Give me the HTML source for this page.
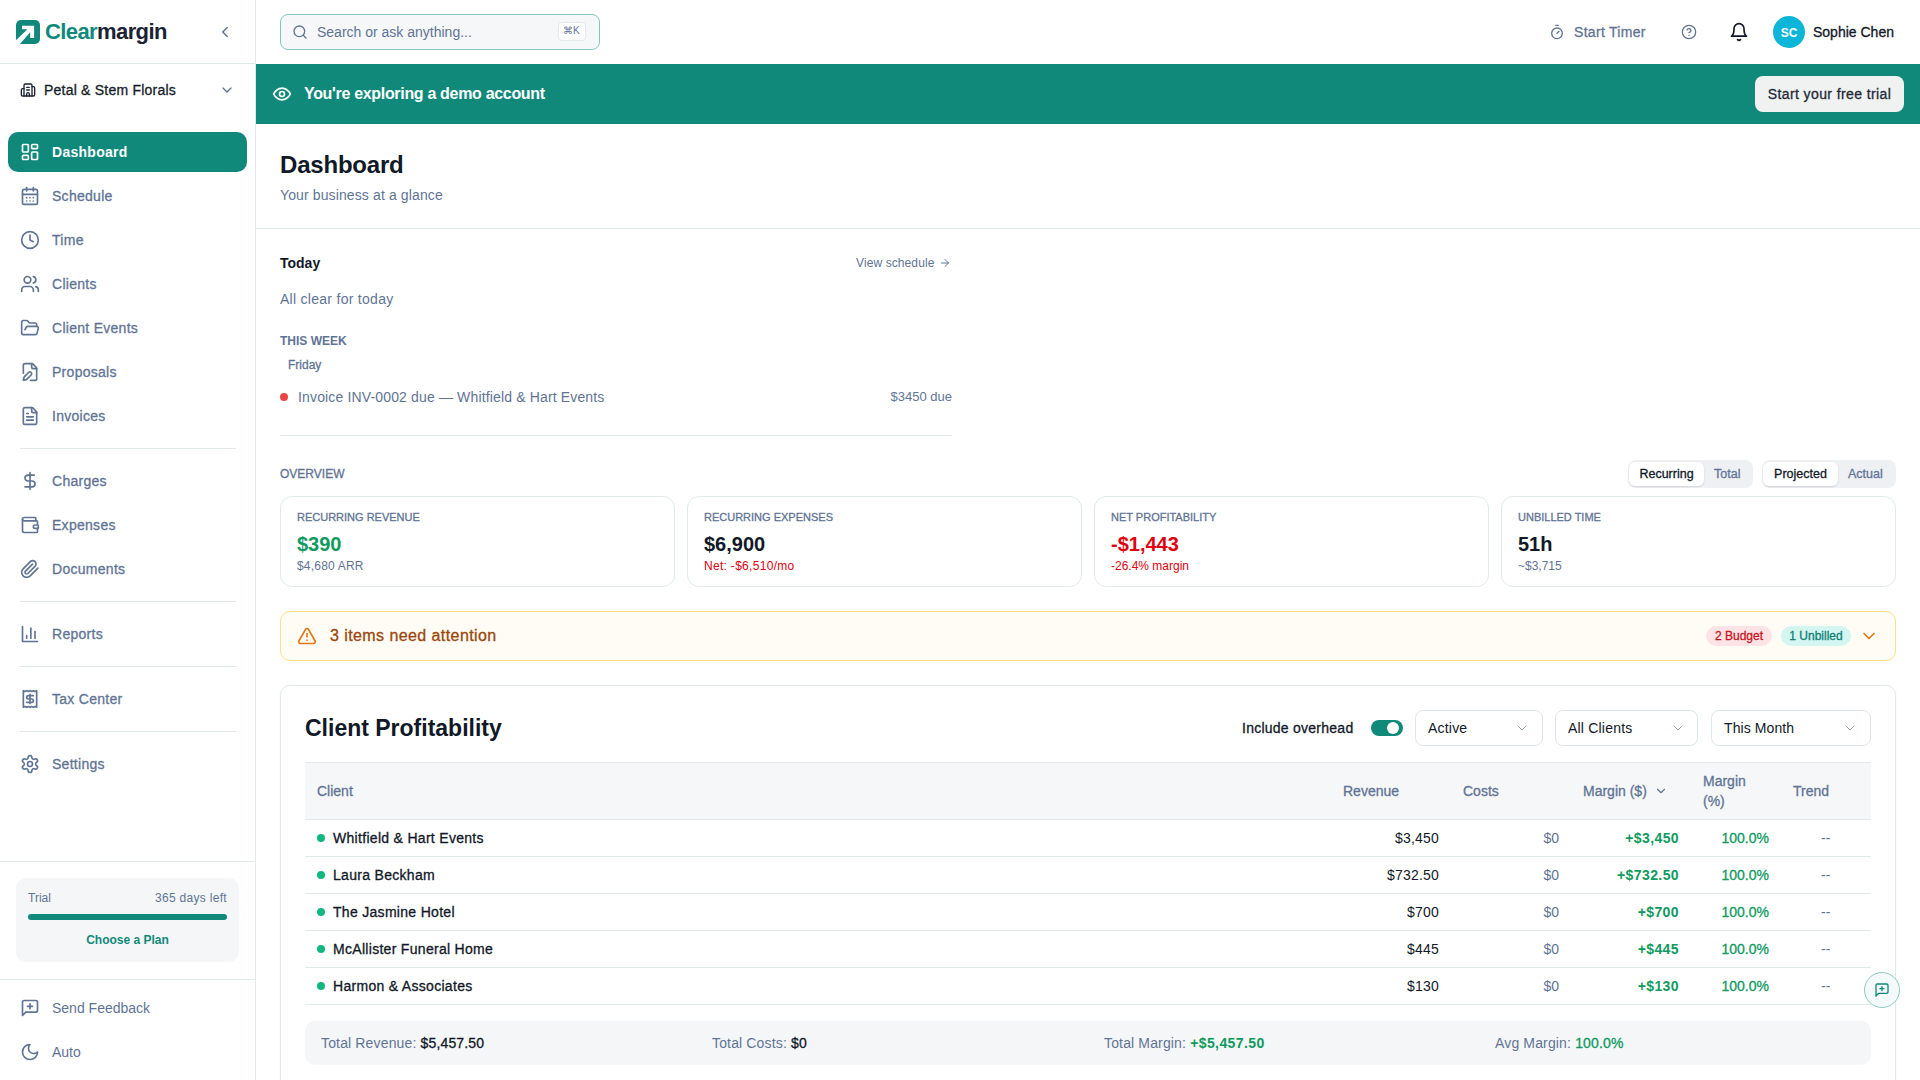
<!DOCTYPE html>
<html><head><meta charset="utf-8">
<style>
*{box-sizing:border-box;margin:0;padding:0}
html,body{width:1920px;height:1080px;overflow:hidden;background:#fff}
body{font-family:"Liberation Sans",sans-serif;color:#111827;position:relative}
.abs{position:absolute}
svg.i{position:absolute;fill:none;stroke:currentColor;stroke-width:2;stroke-linecap:round;stroke-linejoin:round}
.t{position:absolute;white-space:nowrap;line-height:1}
.med{-webkit-text-stroke:0.3px currentColor}
/* sidebar */
#sb{position:absolute;left:0;top:0;width:256px;height:1080px;border-right:1px solid #e1e9ea;background:#fff}
.hr{position:absolute;height:1px;background:#e1e9ea}
.nav{position:absolute;left:8px;width:239px;height:40px;border-radius:10px;color:#5f7495}
.nav svg{left:12px;top:10px;width:20px;height:20px}
.nav .t{left:44px;top:13px;font-size:14px;letter-spacing:0.28px}
.nav.act{background:#10897b;color:#fff}
/* main */
#main{position:absolute;left:256px;top:0;right:0;height:1080px}
.card{position:absolute;border:1px solid #e2eaea;border-radius:12px;background:#fff}
.lbl{font-size:11px;color:#5f7495}
.big{font-size:20px;font-weight:700}
.sub{font-size:12px}
</style></head>
<body>
<!-- SIDEBAR -->
<div id="sb">
  <!-- logo -->
  <svg class="abs" style="left:16px;top:20px;width:24px;height:24px" viewBox="0 0 24 24">
    <rect x="0" y="0" width="24" height="24" rx="5" fill="#10897b"/>
    <path d="M0 20.2 L11.4 9.2 L6 9.2 L6 5.8 L18.1 5.8 L18.1 18.1 L14.2 18.1 L14.2 12.3 L3.9 24 L0 24 Z" fill="#fff"/>
  </svg>
  <div class="t" style="left:45px;top:21px;font-size:22px;font-weight:700;letter-spacing:-0.6px"><span style="color:#10897b">Clear</span><span style="color:#1a2233">margin</span></div>
  <svg class="i" style="left:216px;top:23px;width:18px;height:18px;color:#5f7495" viewBox="0 0 24 24"><path d="m15 18-6-6 6-6"/></svg>
  <div class="hr" style="left:0;top:63px;width:255px"></div>
  <!-- org -->
  <svg class="i" style="left:20px;top:82px;width:16px;height:16px;color:#1a2233" viewBox="0 0 24 24"><path d="M10 12h4"/><path d="M10 8h4"/><path d="M14 21v-3a2 2 0 0 0-4 0v3"/><path d="M6 10H4a2 2 0 0 0-2 2v7a2 2 0 0 0 2 2h16a2 2 0 0 0 2-2V9a2 2 0 0 0-2-2h-2"/><path d="M6 21V5a2 2 0 0 1 2-2h8a2 2 0 0 1 2 2v16"/></svg>
  <div class="t med" style="left:44px;top:83px;font-size:14px;color:#161c28;letter-spacing:0.22px">Petal &amp; Stem Florals</div>
  <svg class="i" style="left:219px;top:82px;width:16px;height:16px;color:#5f7495" viewBox="0 0 24 24"><path d="m6 9 6 6 6-6"/></svg>

  <div class="nav act" style="top:132px"><svg class="i" viewBox="0 0 24 24"><rect width="7" height="9" x="3" y="3" rx="1"/><rect width="7" height="5" x="14" y="3" rx="1"/><rect width="7" height="9" x="14" y="12" rx="1"/><rect width="7" height="5" x="3" y="16" rx="1"/></svg><div class="t" style="font-weight:700">Dashboard</div></div>
  <div class="nav" style="top:176px"><svg class="i" viewBox="0 0 24 24"><path d="M8 2v4"/><path d="M16 2v4"/><rect width="18" height="18" x="3" y="4" rx="2"/><path d="M3 10h18"/><path d="M8 14h.01"/><path d="M12 14h.01"/><path d="M16 14h.01"/><path d="M8 18h.01"/><path d="M12 18h.01"/><path d="M16 18h.01"/></svg><div class="t med">Schedule</div></div>
  <div class="nav" style="top:220px"><svg class="i" viewBox="0 0 24 24"><circle cx="12" cy="12" r="10"/><polyline points="12 6 12 12 16 14"/></svg><div class="t med">Time</div></div>
  <div class="nav" style="top:264px"><svg class="i" viewBox="0 0 24 24"><path d="M16 21v-2a4 4 0 0 0-4-4H6a4 4 0 0 0-4 4v2"/><circle cx="9" cy="7" r="4"/><path d="M22 21v-2a4 4 0 0 0-3-3.87"/><path d="M16 3.13a4 4 0 0 1 0 7.75"/></svg><div class="t med">Clients</div></div>
  <div class="nav" style="top:308px"><svg class="i" viewBox="0 0 24 24"><path d="m6 14 1.5-2.9A2 2 0 0 1 9.24 10H20a2 2 0 0 1 1.94 2.5l-1.54 6a2 2 0 0 1-1.95 1.5H4a2 2 0 0 1-2-2V5a2 2 0 0 1 2-2h3.9a2 2 0 0 1 1.69.9l.81 1.2a2 2 0 0 0 1.67.9H18a2 2 0 0 1 2 2v2"/></svg><div class="t med">Client Events</div></div>
  <div class="nav" style="top:352px"><svg class="i" viewBox="0 0 24 24"><path d="M12.5 22H18a2 2 0 0 0 2-2V7l-5-5H6a2 2 0 0 0-2 2v9.5"/><path d="M14 2v4a2 2 0 0 0 2 2h4"/><path d="M13.378 15.626a1 1 0 1 0-3.004-3.004l-5.01 5.012a2 2 0 0 0-.506.854l-.837 2.87a.5.5 0 0 0 .62.62l2.87-.837a2 2 0 0 0 .854-.506z"/></svg><div class="t med">Proposals</div></div>
  <div class="nav" style="top:396px"><svg class="i" viewBox="0 0 24 24"><path d="M15 2H6a2 2 0 0 0-2 2v16a2 2 0 0 0 2 2h12a2 2 0 0 0 2-2V7Z"/><path d="M14 2v4a2 2 0 0 0 2 2h4"/><path d="M10 9H8"/><path d="M16 13H8"/><path d="M16 17H8"/></svg><div class="t med">Invoices</div></div>
  <div class="hr" style="left:20px;top:448px;width:216px"></div>
  <div class="nav" style="top:461px"><svg class="i" viewBox="0 0 24 24"><line x1="12" x2="12" y1="2" y2="22"/><path d="M17 5H9.5a3.5 3.5 0 0 0 0 7h5a3.5 3.5 0 0 1 0 7H6"/></svg><div class="t med">Charges</div></div>
  <div class="nav" style="top:505px"><svg class="i" viewBox="0 0 24 24"><path d="M19 7V4a1 1 0 0 0-1-1H5a2 2 0 0 0 0 4h15a1 1 0 0 1 1 1v4h-3a2 2 0 0 0 0 4h3a1 1 0 0 0 1-1v-2a1 1 0 0 0-1-1"/><path d="M3 5v14a2 2 0 0 0 2 2h15a1 1 0 0 0 1-1v-4"/></svg><div class="t med">Expenses</div></div>
  <div class="nav" style="top:549px"><svg class="i" viewBox="0 0 24 24"><path d="m21.44 11.05-9.19 9.19a6 6 0 0 1-8.49-8.49l8.57-8.57A4 4 0 1 1 18 8.84l-8.59 8.57a2 2 0 0 1-2.83-2.83l8.49-8.48"/></svg><div class="t med">Documents</div></div>
  <div class="hr" style="left:20px;top:601px;width:216px"></div>
  <div class="nav" style="top:614px"><svg class="i" viewBox="0 0 24 24"><path d="M3 3v18h18"/><path d="M18 17V9"/><path d="M13 17V5"/><path d="M8 17v-3"/></svg><div class="t med">Reports</div></div>
  <div class="hr" style="left:20px;top:666px;width:216px"></div>
  <div class="nav" style="top:679px"><svg class="i" viewBox="0 0 24 24"><path d="M4 2v20l2-1 2 1 2-1 2 1 2-1 2 1 2-1 2 1V2l-2 1-2-1-2 1-2-1-2 1-2-1-2 1Z"/><path d="M16 8h-6a2 2 0 1 0 0 4h4a2 2 0 1 1 0 4H8"/><path d="M12 17.5v-11"/></svg><div class="t med">Tax Center</div></div>
  <div class="hr" style="left:20px;top:731px;width:216px"></div>
  <div class="nav" style="top:744px"><svg class="i" viewBox="0 0 24 24"><path d="M12.22 2h-.44a2 2 0 0 0-2 2v.18a2 2 0 0 1-1 1.73l-.43.25a2 2 0 0 1-2 0l-.15-.08a2 2 0 0 0-2.73.73l-.22.38a2 2 0 0 0 .73 2.73l.15.1a2 2 0 0 1 1 1.72v.51a2 2 0 0 1-1 1.74l-.15.09a2 2 0 0 0-.73 2.73l.22.38a2 2 0 0 0 2.73.73l.15-.08a2 2 0 0 1 2 0l.43.25a2 2 0 0 1 1 1.73V20a2 2 0 0 0 2 2h.44a2 2 0 0 0 2-2v-.18a2 2 0 0 1 1-1.73l.43-.25a2 2 0 0 1 2 0l.15.08a2 2 0 0 0 2.73-.73l.22-.39a2 2 0 0 0-.73-2.73l-.15-.08a2 2 0 0 1-1-1.740v-.5a2 2 0 0 1 1-1.74l.15-.09a2 2 0 0 0 .73-2.73l-.22-.38a2 2 0 0 0-2.73-.73l-.15.08a2 2 0 0 1-2 0l-.43-.25a2 2 0 0 1-1-1.73V4a2 2 0 0 0-2-2z"/><circle cx="12" cy="12" r="3"/></svg><div class="t med">Settings</div></div>

  <div class="hr" style="left:0;top:861px;width:255px"></div>
  <div class="abs" style="left:16px;top:878px;width:223px;height:84px;border-radius:10px;background:#f5f6f8">
    <div class="t" style="left:12px;top:14px;font-size:12px;color:#5f7495">Trial</div>
    <div class="t" style="right:12px;top:14px;font-size:12px;color:#5f7495;letter-spacing:0.3px">365 days left</div>
    <div class="abs" style="left:12px;top:36px;width:199px;height:6px;border-radius:3px;background:#10897b"></div>
    <div class="t" style="left:0;width:223px;text-align:center;top:56px;font-size:12px;font-weight:700;color:#10897b">Choose a Plan</div>
  </div>
  <div class="hr" style="left:0;top:979px;width:255px"></div>
  <div class="nav" style="top:988px"><svg class="i" viewBox="0 0 24 24"><path d="M21 15a2 2 0 0 1-2 2H7l-4 4V5a2 2 0 0 1 2-2h14a2 2 0 0 1 2 2z"/><path d="M12 7v6"/><path d="M9 10h6"/></svg><div class="t" style="letter-spacing:0">Send Feedback</div></div>
  <div class="nav" style="top:1032px"><svg class="i" viewBox="0 0 24 24"><path d="M12 3a6 6 0 0 0 9 9 9 9 0 1 1-9-9Z"/></svg><div class="t" style="letter-spacing:0">Auto</div></div>
</div>

<!-- MAIN -->

<div id="main">
  <!-- header -->
  <div class="abs" style="left:24px;top:14px;width:320px;height:36px;border:1px solid #86c6bd;border-radius:8px;background:#f6f7f9"></div>
  <svg class="i" style="left:36px;top:24px;width:16px;height:16px;color:#5f7495" viewBox="0 0 24 24"><circle cx="11" cy="11" r="8"/><path d="m21 21-4.3-4.3"/></svg>
  <div class="t" style="left:61px;top:25px;font-size:14px;color:#5f7495">Search or ask anything...</div>
  <div class="abs" style="left:302px;top:22px;width:28px;height:19px;border:1px solid #e2eaea;border-radius:4px;background:#fff"></div>
  <div class="t" style="left:307px;top:26px;font-size:10px;color:#5f7495">&#8984;K</div>

  <svg class="i" style="left:1293px;top:24px;width:16px;height:16px;color:#5f7495" viewBox="0 0 24 24"><line x1="10" x2="14" y1="2" y2="2"/><line x1="12" x2="15" y1="14" y2="11"/><circle cx="12" cy="14" r="8"/></svg>
  <div class="t med" style="left:1318px;top:25px;font-size:14px;color:#5f7495;letter-spacing:0.3px">Start Timer</div>
  <svg class="i" style="left:1425px;top:24px;width:16px;height:16px;color:#5f7495;stroke-width:1.9" viewBox="0 0 24 24"><circle cx="12" cy="12" r="10"/><path d="M9.09 9a3 3 0 0 1 5.83 1c0 2-3 3-3 3"/><path d="M12 17h.01"/></svg>
  <svg class="i" style="left:1473px;top:22px;width:20px;height:20px;color:#111827" viewBox="0 0 24 24"><path d="M6 8a6 6 0 0 1 12 0c0 7 3 9 3 9H3s3-2 3-9"/><path d="M10.3 21a1.94 1.94 0 0 0 3.4 0"/></svg>
  <div class="abs" style="left:1517px;top:16px;width:32px;height:32px;border-radius:16px;background:#0db5d8"></div>
  <div class="t" style="left:1517px;width:32px;text-align:center;top:27px;font-size:12px;font-weight:700;color:#fff">SC</div>
  <div class="t med" style="left:1557px;top:25px;font-size:14px;color:#111827">Sophie Chen</div>

  <!-- banner -->
  <div class="abs" style="left:0;top:64px;width:1664px;height:60px;background:#10897b"></div>
  <svg class="i" style="left:16px;top:84px;width:20px;height:20px;color:#fff" viewBox="0 0 24 24"><path d="M2 12s3-7 10-7 10 7 10 7-3 7-10 7-10-7-10-7Z"/><circle cx="12" cy="12" r="3"/></svg>
  <div class="t" style="left:48px;top:86px;font-size:16px;font-weight:700;color:#fff;letter-spacing:-0.32px">You're exploring a demo account</div>
  <div class="abs" style="left:1499px;top:76px;width:149px;height:36px;border-radius:8px;background:#eff2f1"></div>
  <div class="t med" style="left:1499px;width:149px;text-align:center;top:87px;font-size:14px;color:#1e2939;letter-spacing:0.4px">Start your free trial</div>

  <!-- page header -->
  <div class="t" style="left:24px;top:153px;font-size:24px;font-weight:700;color:#111827;letter-spacing:-0.2px">Dashboard</div>
  <div class="t" style="left:24px;top:188px;font-size:14px;color:#5f7495;letter-spacing:0.12px">Your business at a glance</div>
  <div class="hr" style="left:0;top:228px;width:1664px"></div>

  <!-- today -->
  <div class="t" style="left:24px;top:256px;font-size:14px;font-weight:700;color:#111827">Today</div>
  <div class="t" style="left:600px;top:257px;font-size:12px;color:#5f7495;letter-spacing:0.1px">View schedule</div>
  <svg class="i" style="left:683px;top:257px;width:12px;height:12px;color:#5f7495" viewBox="0 0 24 24"><path d="M5 12h14"/><path d="m12 5 7 7-7 7"/></svg>
  <div class="t" style="left:24px;top:292px;font-size:14px;color:#5f7495;letter-spacing:0.28px">All clear for today</div>
  <div class="t" style="left:24px;top:335px;font-size:12px;font-weight:700;color:#5f7495">THIS WEEK</div>
  <div class="t med" style="left:32px;top:359px;font-size:12px;color:#5f7495">Friday</div>
  <div class="abs" style="left:24px;top:393px;width:8px;height:8px;border-radius:4px;background:#ef4444"></div>
  <div class="t" style="left:42px;top:390px;font-size:14px;color:#5f7495;letter-spacing:0.15px">Invoice INV-0002 due — Whitfield &amp; Hart Events</div>
  <div class="t" style="right:968px;top:390px;font-size:13px;color:#5f7495">$3450 due</div>
  <div class="hr" style="left:24px;top:435px;width:672px"></div>

  <!-- overview -->
  <div class="t med" style="left:24px;top:468px;font-size:12px;color:#5f7495">OVERVIEW</div>
  <div class="abs" style="left:1372px;top:460px;width:125px;height:28px;border-radius:8px;background:#eef0f4"></div>
  <div class="abs" style="left:1373px;top:462px;width:75px;height:24px;border-radius:6px;background:#fff;box-shadow:0 1px 2px rgba(0,0,0,0.12)"></div>
  <div class="t med" style="left:1373px;width:75px;text-align:center;top:468px;font-size:12.5px;color:#111827">Recurring</div>
  <div class="t med" style="left:1458px;top:468px;font-size:12.5px;color:#5f7495">Total</div>
  <div class="abs" style="left:1506px;top:460px;width:134px;height:28px;border-radius:8px;background:#eef0f4"></div>
  <div class="abs" style="left:1507px;top:462px;width:75px;height:24px;border-radius:6px;background:#fff;box-shadow:0 1px 2px rgba(0,0,0,0.12)"></div>
  <div class="t med" style="left:1507px;width:75px;text-align:center;top:468px;font-size:12.5px;color:#111827">Projected</div>
  <div class="t med" style="left:1592px;top:468px;font-size:12.5px;color:#5f7495">Actual</div>

  <div class="card" style="left:24px;top:496px;width:395px;height:91px">
    <div class="t lbl med" style="left:16px;top:15px">RECURRING REVENUE</div>
    <div class="t big" style="left:16px;top:37px;color:#0f9a5f">$390</div>
    <div class="t sub" style="left:16px;top:63px;color:#5f7495;letter-spacing:0.2px">$4,680 ARR</div>
  </div>
  <div class="card" style="left:431px;top:496px;width:395px;height:91px">
    <div class="t lbl med" style="left:16px;top:15px">RECURRING EXPENSES</div>
    <div class="t big" style="left:16px;top:37px;color:#111827">$6,900</div>
    <div class="t sub" style="left:16px;top:63px;color:#e0000f;letter-spacing:0.3px">Net: -$6,510/mo</div>
  </div>
  <div class="card" style="left:838px;top:496px;width:395px;height:91px">
    <div class="t lbl med" style="left:16px;top:15px">NET PROFITABILITY</div>
    <div class="t big" style="left:16px;top:37px;color:#e0000f">-$1,443</div>
    <div class="t sub" style="left:16px;top:63px;color:#e0000f">-26.4% margin</div>
  </div>
  <div class="card" style="left:1245px;top:496px;width:395px;height:91px">
    <div class="t lbl med" style="left:16px;top:15px">UNBILLED TIME</div>
    <div class="t big" style="left:16px;top:37px;color:#111827">51h</div>
    <div class="t sub" style="left:16px;top:63px;color:#5f7495">~$3,715</div>
  </div>

  <!-- alert -->
  <div class="abs" style="left:24px;top:611px;width:1616px;height:50px;border:1px solid #fbe08a;border-radius:10px;background:#fffcf5"></div>
  <svg class="i" style="left:41px;top:626px;width:20px;height:20px;color:#e5760f" viewBox="0 0 24 24"><path d="m21.73 18-8-14a2 2 0 0 0-3.48 0l-8 14A2 2 0 0 0 4 21h16a2 2 0 0 0 1.73-3"/><path d="M12 9v4"/><path d="M12 17h.01"/></svg>
  <div class="t med" style="left:74px;top:628px;font-size:16px;color:#9a460c;letter-spacing:0.42px">3 items need attention</div>
  <div class="abs" style="left:1450px;top:626px;width:66px;height:20px;border-radius:10px;background:#fde3e5"></div>
  <div class="t med" style="left:1450px;width:66px;text-align:center;top:630px;font-size:12px;color:#c81421;-webkit-text-stroke:0.3px #c81421">2 Budget</div>
  <div class="abs" style="left:1525px;top:626px;width:70px;height:20px;border-radius:10px;background:#d3f6f1"></div>
  <div class="t med" style="left:1525px;width:70px;text-align:center;top:630px;font-size:12px;color:#0f8073;-webkit-text-stroke:0.3px #0f8073">1 Unbilled</div>
  <svg class="i" style="left:1603px;top:626px;width:20px;height:20px;color:#e5760f" viewBox="0 0 24 24"><path d="m6 9 6 6 6-6"/></svg>
  <!-- client profitability -->
  <div class="abs" style="left:24px;top:685px;width:1616px;height:440px;border:1px solid #e1e9ea;border-radius:10px;background:#fff;box-shadow:0 1px 3px rgba(0,0,0,0.05)"></div>
  <div class="t" style="left:49px;top:717px;font-size:23px;font-weight:700;color:#111827;letter-spacing:0px">Client Profitability</div>
  <div class="t med" style="left:986px;top:721px;font-size:14px;color:#111827;letter-spacing:0.25px">Include overhead</div>
  <div class="abs" style="left:1115px;top:720px;width:32px;height:16px;border-radius:8px;background:#10897b"></div>
  <div class="abs" style="left:1131px;top:722px;width:12px;height:12px;border-radius:6px;background:#fff"></div>
  <div class="abs" style="left:1159px;top:710px;width:128px;height:36px;border:1px solid #dfe7ea;border-radius:8px;background:#fff"></div>
  <div class="t" style="left:1172px;top:721px;font-size:14px;color:#111827;letter-spacing:0.2px">Active</div>
  <svg class="i" style="left:1258px;top:720px;width:16px;height:16px;color:#94a3b8;stroke-width:1.5" viewBox="0 0 24 24"><path d="m6 9 6 6 6-6"/></svg>
  <div class="abs" style="left:1299px;top:710px;width:143px;height:36px;border:1px solid #dfe7ea;border-radius:8px;background:#fff"></div>
  <div class="t" style="left:1312px;top:721px;font-size:14px;color:#111827;letter-spacing:0.2px">All Clients</div>
  <svg class="i" style="left:1414px;top:720px;width:16px;height:16px;color:#94a3b8;stroke-width:1.5" viewBox="0 0 24 24"><path d="m6 9 6 6 6-6"/></svg>
  <div class="abs" style="left:1455px;top:710px;width:160px;height:36px;border:1px solid #dfe7ea;border-radius:8px;background:#fff"></div>
  <div class="t" style="left:1468px;top:721px;font-size:14px;color:#111827;letter-spacing:0.1px">This Month</div>
  <svg class="i" style="left:1586px;top:720px;width:16px;height:16px;color:#94a3b8;stroke-width:1.5" viewBox="0 0 24 24"><path d="m6 9 6 6 6-6"/></svg>

  <div class="abs" style="left:49px;top:762px;width:1566px;height:58px;background:#f6f7f9;border-top:1px solid #e1e9ea;border-bottom:1px solid #e1e9ea"></div>
  <div class="t med" style="left:61px;top:784px;font-size:14px;color:#5f7495">Client</div>
  <div class="t med" style="left:1087px;top:784px;font-size:14px;color:#5f7495">Revenue</div>
  <div class="t med" style="left:1207px;top:784px;font-size:14px;color:#5f7495">Costs</div>
  <div class="t med" style="left:1327px;top:784px;font-size:14px;color:#5f7495">Margin ($)</div>
  <svg class="i" style="left:1398px;top:784px;width:14px;height:14px;color:#5f7495" viewBox="0 0 24 24"><path d="m6 9 6 6 6-6"/></svg>
  <div class="t med" style="left:1447px;top:771px;font-size:14px;color:#5f7495;line-height:20px">Margin<br>(%)</div>
  <div class="t med" style="left:1537px;top:784px;font-size:14px;color:#5f7495">Trend</div>
  <div class="abs" style="left:61px;top:834px;width:8px;height:8px;border-radius:4px;background:#10b77f"></div>
  <div class="t med" style="left:77px;top:831px;font-size:14px;color:#111827;letter-spacing:0.3px">Whitfield &amp; Hart Events</div>
  <div class="t" style="right:481px;top:831px;font-size:14px;color:#111827;letter-spacing:0.2px">$3,450</div>
  <div class="t" style="right:361px;top:831px;font-size:14px;color:#5f7495">$0</div>
  <div class="t" style="right:241px;top:831px;font-size:14px;font-weight:700;color:#0f9a5f;letter-spacing:0.4px">+$3,450</div>
  <div class="t med" style="right:151px;top:831px;font-size:14px;color:#0f9a5f">100.0%</div>
  <div class="t" style="left:1565px;top:831px;font-size:14px;color:#5f7495">--</div>
  <div class="hr" style="left:49px;top:856px;width:1566px"></div>
  <div class="abs" style="left:61px;top:871px;width:8px;height:8px;border-radius:4px;background:#10b77f"></div>
  <div class="t med" style="left:77px;top:868px;font-size:14px;color:#111827;letter-spacing:0.3px">Laura Beckham</div>
  <div class="t" style="right:481px;top:868px;font-size:14px;color:#111827;letter-spacing:0.2px">$732.50</div>
  <div class="t" style="right:361px;top:868px;font-size:14px;color:#5f7495">$0</div>
  <div class="t" style="right:241px;top:868px;font-size:14px;font-weight:700;color:#0f9a5f;letter-spacing:0.4px">+$732.50</div>
  <div class="t med" style="right:151px;top:868px;font-size:14px;color:#0f9a5f">100.0%</div>
  <div class="t" style="left:1565px;top:868px;font-size:14px;color:#5f7495">--</div>
  <div class="hr" style="left:49px;top:893px;width:1566px"></div>
  <div class="abs" style="left:61px;top:908px;width:8px;height:8px;border-radius:4px;background:#10b77f"></div>
  <div class="t med" style="left:77px;top:905px;font-size:14px;color:#111827;letter-spacing:0.3px">The Jasmine Hotel</div>
  <div class="t" style="right:481px;top:905px;font-size:14px;color:#111827;letter-spacing:0.2px">$700</div>
  <div class="t" style="right:361px;top:905px;font-size:14px;color:#5f7495">$0</div>
  <div class="t" style="right:241px;top:905px;font-size:14px;font-weight:700;color:#0f9a5f;letter-spacing:0.4px">+$700</div>
  <div class="t med" style="right:151px;top:905px;font-size:14px;color:#0f9a5f">100.0%</div>
  <div class="t" style="left:1565px;top:905px;font-size:14px;color:#5f7495">--</div>
  <div class="hr" style="left:49px;top:930px;width:1566px"></div>
  <div class="abs" style="left:61px;top:945px;width:8px;height:8px;border-radius:4px;background:#10b77f"></div>
  <div class="t med" style="left:77px;top:942px;font-size:14px;color:#111827;letter-spacing:0.3px">McAllister Funeral Home</div>
  <div class="t" style="right:481px;top:942px;font-size:14px;color:#111827;letter-spacing:0.2px">$445</div>
  <div class="t" style="right:361px;top:942px;font-size:14px;color:#5f7495">$0</div>
  <div class="t" style="right:241px;top:942px;font-size:14px;font-weight:700;color:#0f9a5f;letter-spacing:0.4px">+$445</div>
  <div class="t med" style="right:151px;top:942px;font-size:14px;color:#0f9a5f">100.0%</div>
  <div class="t" style="left:1565px;top:942px;font-size:14px;color:#5f7495">--</div>
  <div class="hr" style="left:49px;top:967px;width:1566px"></div>
  <div class="abs" style="left:61px;top:982px;width:8px;height:8px;border-radius:4px;background:#10b77f"></div>
  <div class="t med" style="left:77px;top:979px;font-size:14px;color:#111827;letter-spacing:0.3px">Harmon &amp; Associates</div>
  <div class="t" style="right:481px;top:979px;font-size:14px;color:#111827;letter-spacing:0.2px">$130</div>
  <div class="t" style="right:361px;top:979px;font-size:14px;color:#5f7495">$0</div>
  <div class="t" style="right:241px;top:979px;font-size:14px;font-weight:700;color:#0f9a5f;letter-spacing:0.4px">+$130</div>
  <div class="t med" style="right:151px;top:979px;font-size:14px;color:#0f9a5f">100.0%</div>
  <div class="t" style="left:1565px;top:979px;font-size:14px;color:#5f7495">--</div>
  <div class="hr" style="left:49px;top:1004px;width:1566px"></div>

  <div class="abs" style="left:49px;top:1021px;width:1566px;height:44px;border-radius:10px;background:#f5f6f8"></div>
  <div class="t" style="left:65px;top:1036px;font-size:14px;color:#5f7495;letter-spacing:0.15px">Total Revenue: <span class="med" style="color:#111827">$5,457.50</span></div>
  <div class="t" style="left:456px;top:1036px;font-size:14px;color:#5f7495;letter-spacing:0.15px">Total Costs: <span class="med" style="color:#111827">$0</span></div>
  <div class="t" style="left:848px;top:1036px;font-size:14px;color:#5f7495;letter-spacing:0.15px">Total Margin: <span style="font-weight:700;color:#0f9a5f;letter-spacing:0.4px">+$5,457.50</span></div>
  <div class="t" style="left:1239px;top:1036px;font-size:14px;color:#5f7495;letter-spacing:0.15px">Avg Margin: <span class="med" style="color:#0f9a5f">100.0%</span></div>

  <div class="abs" style="left:1608px;top:972px;width:36px;height:36px;border-radius:18px;border:1px solid #8ccbc2;background:#f4faf9"></div>
  <svg class="i" style="left:1618px;top:982px;width:16px;height:16px;color:#10897b" viewBox="0 0 24 24"><path d="M21 15a2 2 0 0 1-2 2H7l-4 4V5a2 2 0 0 1 2-2h14a2 2 0 0 1 2 2z"/><path d="M12 7v6"/><path d="M9 10h6"/></svg>
</div>

</body></html>
